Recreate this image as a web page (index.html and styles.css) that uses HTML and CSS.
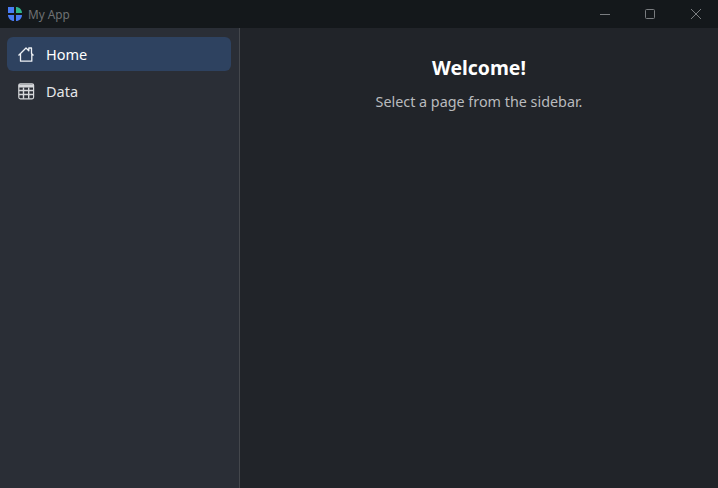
FILE: index.html
```html
<!DOCTYPE html>
<html lang="en">
<head>
<meta charset="utf-8">
<title>My App</title>
<link rel="stylesheet" href="styles.css">
</head>
<body>
<div class="window">
  <header class="titlebar">
    <div class="app-id">
      <svg class="logo" width="16" height="16" viewBox="0 0 16 16">
        <path d="M1 1H7V7H1Z" fill="#4a7cf5"/>
        <path d="M9 1C12.3 1 15 3.7 15 7H9Z" fill="#2fb58c"/>
        <path d="M1 9H7V15C3.7 15 1 12.3 1 9Z" fill="#4a7cf5"/>
        <path d="M9 9H15C15 12.3 12.3 15 9 15Z" fill="#4a7cf5"/>
      </svg>
      <span class="app-name">My App</span>
    </div>
    <div class="controls">
      <span class="ctl"><svg width="12" height="12" viewBox="0 0 12 12"><path d="M1 6.5H11" stroke="#7a7d80" fill="none"/></svg></span>
      <span class="ctl"><svg width="12" height="12" viewBox="0 0 12 12"><rect x="1.5" y="1.5" width="9" height="9" rx="1" stroke="#7a7d80" fill="none"/></svg></span>
      <span class="ctl"><svg width="12" height="12" viewBox="0 0 12 12"><path d="M1 1L11 11M11 1L1 11" stroke="#7a7d80" fill="none"/></svg></span>
    </div>
  </header>
  <div class="body">
    <nav class="sidebar">
      <a class="nav-item active">
        <svg class="nav-icon" width="18" height="18" viewBox="0 0 18 18"><path d="M1.5 10.5L9 3L11.8 5.8V3H14.5V8.5L16.5 10.5M3.5 9V16.2H14.8V9" fill="none" stroke="#eef1f5" stroke-width="1.3" stroke-linejoin="round"/></svg>
        <span>Home</span>
      </a>
      <a class="nav-item">
        <svg class="nav-icon" width="18" height="18" viewBox="0 0 18 18"><rect x="1.8" y="1.8" width="14.8" height="15" rx="1.5" fill="none" stroke="#d5d7da" stroke-width="1.2"/><path d="M1.8 2.5H16.6V5.5H1.8Z" fill="#d5d7da"/><path d="M1.8 8.5H16.6M1.8 12.5H16.6M6.5 5.5V16.8M11.7 5.5V16.8" stroke="#d5d7da" stroke-width="1.4" fill="none"/></svg>
        <span>Data</span>
      </a>
    </nav>
    <main class="content">
      <h1 class="heading">Welcome!</h1>
      <p class="subtitle">Select a page from the sidebar.</p>
    </main>
  </div>
</div>
</body>
</html>
```
FILE: styles.css
```css
* { box-sizing: border-box; }
html, body { margin: 0; height: 100%; }
body { font-family: "Noto Sans", "Open Sans", sans-serif; background: #212429; overflow: hidden; }
.window { display: flex; flex-direction: column; height: 488px; width: 718px; }
.titlebar { height: 28px; flex: none; background: #14181b; display: flex; justify-content: space-between; align-items: center; }
.app-id { display: flex; align-items: center; gap: 5px; padding-left: 7px; }
.logo { display: block; margin-bottom: 1px; }
.app-name { font-size: 11.8px; color: #6f7173; }
.controls { display: flex; gap: 1px; }
.ctl { width: 44px; height: 28px; display: flex; align-items: center; justify-content: center; }
.ctl:nth-child(2) { margin-right: 1px; }
.body { flex: 1; display: flex; min-height: 0; }
.sidebar { width: 240px; flex: none; background: #2a2e36; border-right: 1px solid #44474c; padding: 9px 8px 0 7px; display: flex; flex-direction: column; gap: 3px; }
.nav-item { height: 34px; border-radius: 6px; display: flex; align-items: center; padding-left: 10px; gap: 11px; font-size: 14.5px; color: #e4e6e8; }
.nav-item.active { background: #2e4260; color: #fff; }
.nav-icon { display: block; flex: none; }
.content { flex: 1; display: flex; flex-direction: column; align-items: center; padding-top: 25px; }
.heading { margin: 0; font-size: 19.4px; line-height: 29px; font-weight: 700; color: #fff; }
.subtitle { margin: 10px 0 0; font-size: 14.35px; line-height: 20px; color: #b9bbbe; }
```
